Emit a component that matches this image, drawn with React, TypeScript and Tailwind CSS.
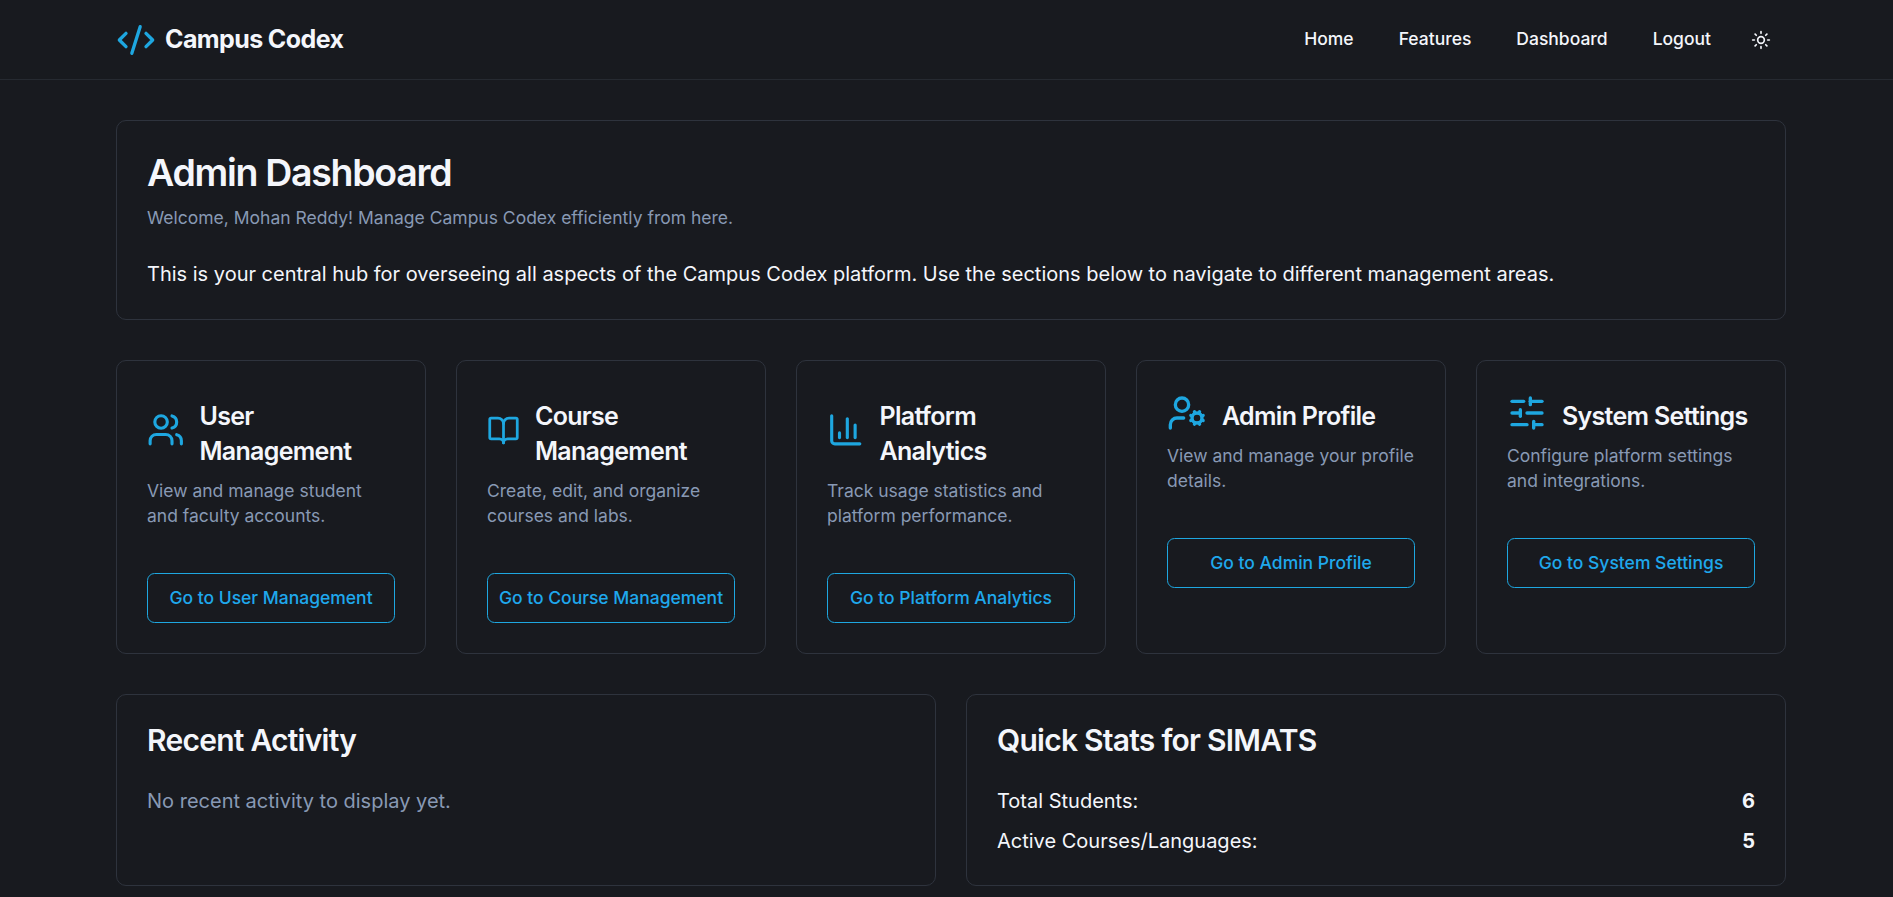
import { Code2, Sun, Users, BookOpen, BarChart3, UserCog, SlidersHorizontal } from "lucide-react";

const cards = [
  { icon: Users, size: "size-[37.5px]", title: "User Management", desc: "View and manage student and faculty accounts.", cta: "Go to User Management" },
  { icon: BookOpen, size: "size-[33px]", title: "Course Management", desc: "Create, edit, and organize courses and labs.", cta: "Go to Course Management" },
  { icon: BarChart3, size: "size-[37.5px]", title: "Platform Analytics", desc: "Track usage statistics and platform performance.", cta: "Go to Platform Analytics" },
  { icon: UserCog, size: "size-[40px]", title: "Admin Profile", desc: "View and manage your profile details.", cta: "Go to Admin Profile" },
  { icon: SlidersHorizontal, size: "size-[40px]", title: "System Settings", desc: "Configure platform settings and integrations.", cta: "Go to System Settings" },
];

export default function App() {
  return (
    <div className="min-h-screen bg-[#181a1f] font-[Inter,sans-serif] text-[#f4f6fb]">
      <header className="flex h-[80px] items-center justify-between border-b border-[#262a31] pl-[116px] pr-[107px]">
        <div className="flex items-center gap-[9px]">
          <Code2 className="size-[40px] text-[#1ea7e0]" />
          <span className="text-[25px] font-bold tracking-[-0.6px]">Campus Codex</span>
        </div>
        <nav className="flex items-center text-[17.5px] font-medium">
          <div className="flex items-center gap-[45px]">
            <a>Home</a>
            <a>Features</a>
            <a>Dashboard</a>
            <a>Logout</a>
          </div>
          <button className="ml-[25px] flex size-[50px] items-center justify-center">
            <Sun className="size-[20px]" />
          </button>
        </nav>
      </header>

      <main className="pb-[11px] pl-[116px] pr-[107px] pt-[40px]">
        <section className="rounded-[10px] border border-[#2e333d] px-[30px] pb-[30px] pt-[33px]">
          <h1 className="text-[37.5px] font-semibold leading-[37.5px] tracking-[-1.3px]">Admin Dashboard</h1>
          <p className="mt-[13px] text-[17.5px] leading-[25px] text-[#8899b4]">
            Welcome, Mohan Reddy! Manage Campus Codex efficiently from here.
          </p>
          <p className="mt-[29px] text-[20px] leading-[30px]">
            This is your central hub for overseeing all aspects of the Campus Codex platform. Use the sections below to navigate to different management areas.
          </p>
        </section>

        <section className="mt-[40px] grid grid-cols-5 gap-[30px]">
          {cards.map(({ icon: Icon, size, title, desc, cta }) => (
            <div key={title} className="rounded-[10px] border border-[#2e333d] px-[30px] pb-[30px] pt-[38.5px]">
              <div className="flex items-center gap-[15px]">
                <Icon className={`-mt-[8px] shrink-0 text-[#1ea7e0] ${size}`} />
                <h2 className="text-[25px] font-semibold leading-[35px] tracking-[-0.7px]">{title}</h2>
              </div>
              <p className="mt-[9px] text-[17.5px] leading-[25px] text-[#8899b4]">{desc}</p>
              <button className="mt-[44.5px] h-[50px] w-full rounded-[7.5px] border border-[#1ea7e0] pt-[2px] text-[17.5px] font-medium text-[#1fa8ec]">
                {cta}
              </button>
            </div>
          ))}
        </section>

        <section className="mt-[40px] grid grid-cols-2 gap-[30px]">
          <div className="rounded-[10px] border border-[#2e333d] px-[30px] pb-[29px] pt-[30px]">
            <h2 className="text-[30px] font-semibold leading-[30px] tracking-tight">Recent Activity</h2>
            <p className="mt-[31px] text-[20px] leading-[30px] text-[#8899b4]">No recent activity to display yet.</p>
          </div>
          <div className="rounded-[10px] border border-[#2e333d] px-[30px] pb-[29px] pt-[30px]">
            <h2 className="text-[30px] font-semibold leading-[30px] tracking-tight">Quick Stats for SIMATS</h2>
            <div className="mt-[31px] flex flex-col gap-[10px] text-[20px] leading-[30px]">
              <div className="flex justify-between">
                <span>Total Students:</span>
                <span className="font-bold">6</span>
              </div>
              <div className="flex justify-between">
                <span>Active Courses/Languages:</span>
                <span className="font-bold">5</span>
              </div>
            </div>
          </div>
        </section>
      </main>
    </div>
  );
}
